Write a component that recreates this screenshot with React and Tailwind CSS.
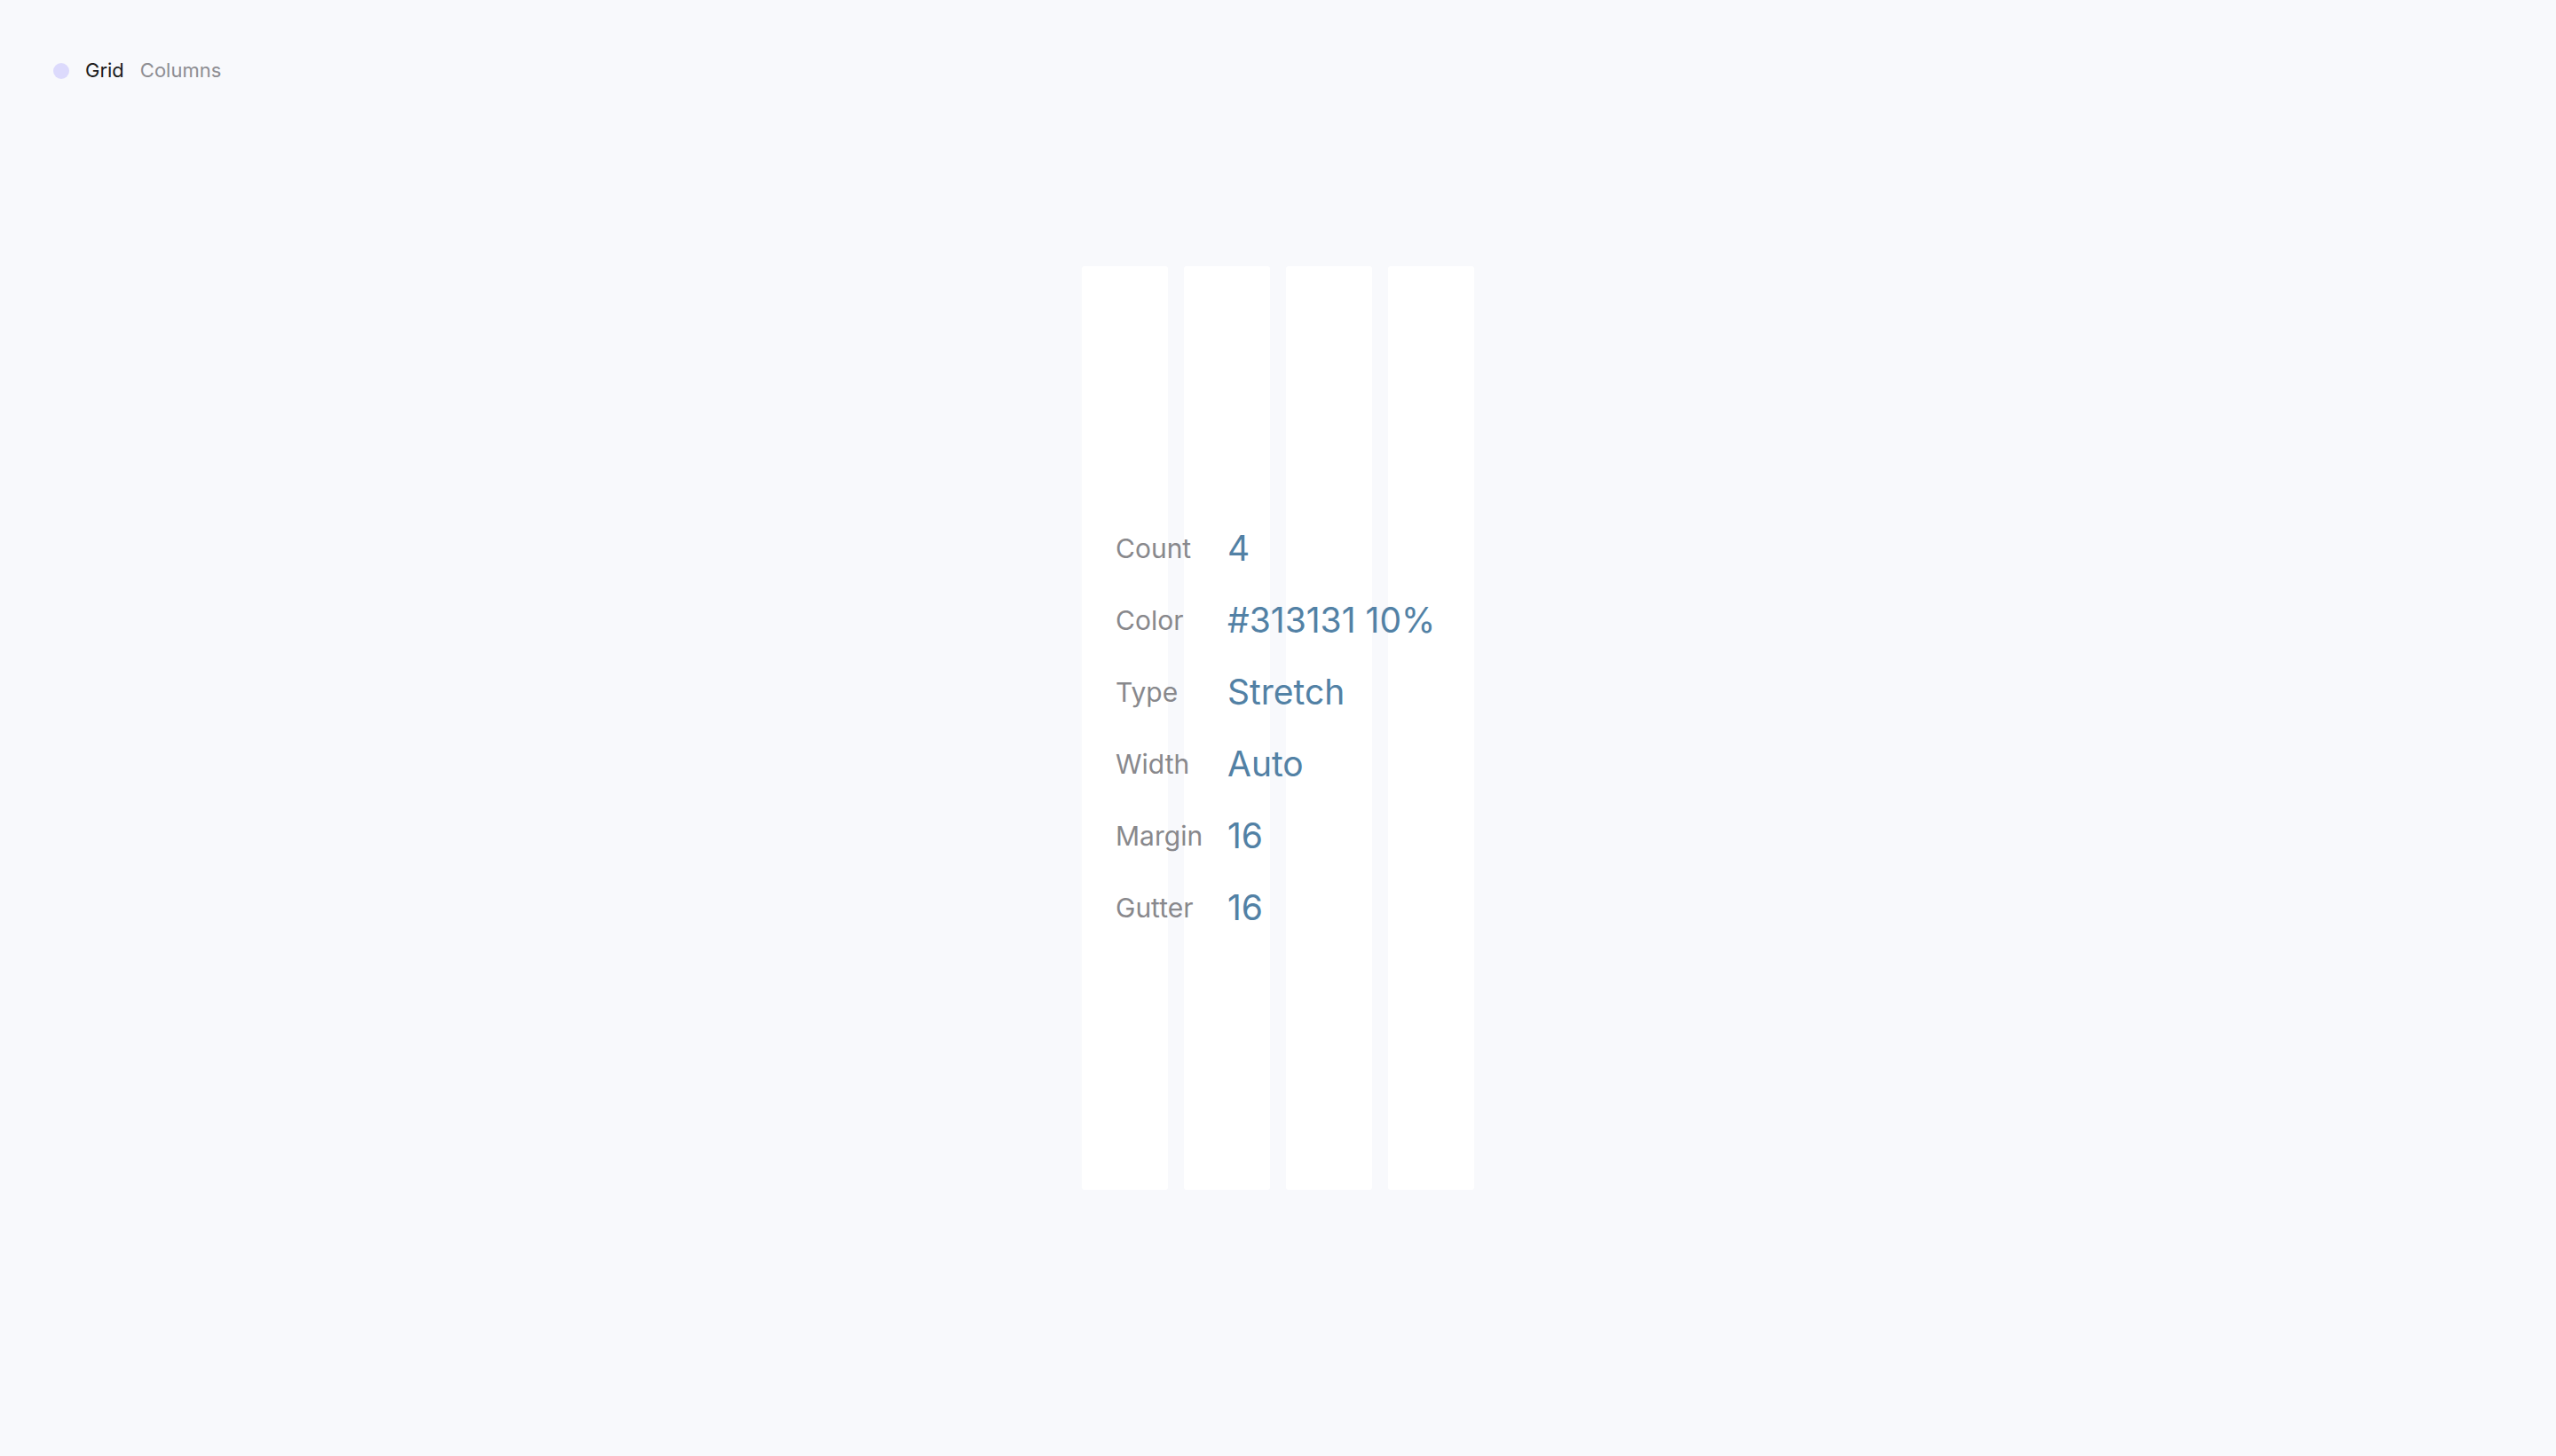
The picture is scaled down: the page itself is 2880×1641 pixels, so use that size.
// Grid settings preview
const rows = [
    ["Count", "4"],
    ["Color", "#313131 10%"],
    ["Type", "Stretch"],
    ["Width", "Auto"],
    ["Margin", "16"],
    ["Gutter", "16"],
]

export default function App() {
    return (
        <div className="min-h-screen grid bg-[#f8f9fc] font-['Inter',sans-serif]">
            <header className="[grid-area:1/1] self-start flex items-center pl-[60px] pt-[63px] text-[22px]">
                <span className="w-[18px] h-[18px] rounded-full bg-[#dcdafc]" />
                <span className="ml-[18px] text-[#1c1c1c]">Grid</span>
                <span className="ml-[18px] text-[#8e8e93]">Columns</span>
            </header>

            <main className="[grid-area:1/1] place-self-center grid">
                <div className="[grid-area:1/1] flex gap-[18px]">
                    {[0, 1, 2, 3].map((i) => (
                        <div key={i} className="w-[97px] h-[1041px] rounded-[3px] bg-white" />
                    ))}
                </div>
                <div className="[grid-area:1/1] self-center flex flex-col pl-[38px]">
                    {rows.map(([label, value]) => (
                        <div key={label} className="h-[81px] flex items-center">
                            <span className="w-[126px] text-[30px] text-[#88888c]">{label}</span>
                            <span className="text-[39px] text-[#5281a5] whitespace-nowrap">{value}</span>
                        </div>
                    ))}
                </div>
            </main>
        </div>
    )
}
